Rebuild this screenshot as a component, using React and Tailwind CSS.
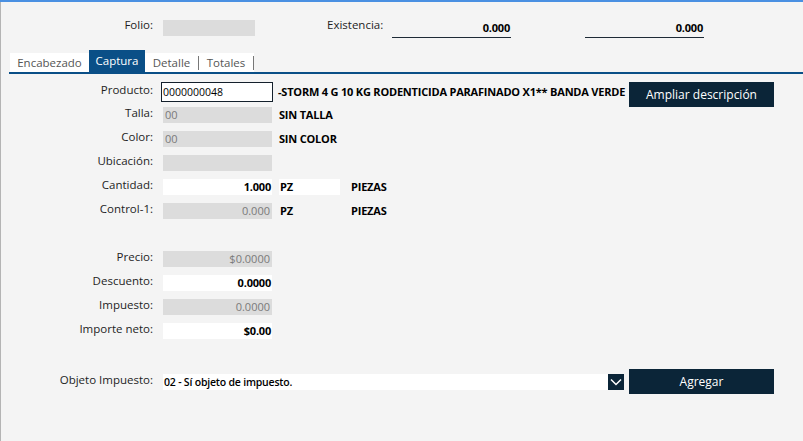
import React from "react";

const font = { fontFamily: '"Open Sans", "Noto Sans", sans-serif' };

function Label({ children, className = "" }) {
  return (
    <div className={`w-[153px] shrink-0 text-right pr-[1px] text-[11.5px] leading-[16px] text-[#1e1e1e] ${className}`}>
      {children}
    </div>
  );
}

function Gray({ children, align = "left" }) {
  return (
    <div
      className={`ml-[9px] w-[109px] h-[16px] bg-[#dcdcdc] text-[11px] leading-[16px] text-[#7a7a7a] px-[2px] ${
        align === "right" ? "text-right" : "text-left"
      }`}
    >
      {children}
    </div>
  );
}

function White({ children }) {
  return (
    <div className="ml-[9px] w-[109px] h-[16px] bg-white text-[11px] leading-[16px] text-black font-bold text-right px-[1px] tracking-[-0.2px]">
      {children}
    </div>
  );
}

function Bold({ children, className = "" }) {
  return <div className={`text-[11px] font-bold text-black tracking-[-0.2px] whitespace-nowrap ${className}`}>{children}</div>;
}

export default function App() {
  return (
    <div
      style={font}
      className="w-[803px] h-[441px] bg-[#f4f4f4] border-t-2 border-[#4a90e2] relative overflow-hidden"
    >
      <div className="h-full border-l border-[#b4b4b4] flex flex-col">
        {/* Header */}
        <div className="flex items-start mt-[18px] h-[20px]">
          <Label className="-mt-[3px]">Folio:</Label>
          <div className="ml-[9px] w-[92px] h-[16px] bg-[#dcdcdc]" />
          <div className="ml-[72px] -mt-[3px] text-[11.5px] leading-[16px] text-[#1e1e1e] w-[65px]">Existencia:</div>
          <div className="w-[119px] h-[18px] border-b border-[#1e2a36] text-right text-[11px] font-bold leading-[16px] text-black pr-[1px] tracking-[-0.2px]">
            0.000
          </div>
          <div className="ml-[74px] w-[119px] h-[18px] border-b border-[#1e2a36] text-right text-[11px] font-bold leading-[16px] text-black pr-[1px] tracking-[-0.2px]">
            0.000
          </div>
        </div>

        {/* Tabs */}
        <div className="mt-[10px] ml-[8px] pl-[1px] flex items-end border-b-2 border-[#0a4f87] h-[24px]">
          <div className="w-[79px] h-[19px] bg-white text-[11.5px] leading-[19px] text-[#555] text-center">
            Encabezado
          </div>
          <div className="w-[56px] h-[22px] bg-[#0a4f87] text-[11.5px] leading-[22px] text-white text-center">
            Captura
          </div>
          <div className="h-[19px] bg-white flex items-center text-[11.5px] text-[#555]">
            <div className="w-[54px] text-center border-r border-[#777] leading-[14px]">Detalle</div>
            <div className="w-[55px] text-center border-r border-[#777] leading-[14px]">Totales</div>
          </div>
        </div>

        {/* Body */}
        <div className="mt-[8px] flex flex-col">
          {/* Producto */}
          <div className="flex items-center h-[20px]">
            <Label className="-mt-[4px]">Producto:</Label>
            <div className="ml-[7px] w-[112px] h-[20px] border border-[#14202c] bg-white text-[10.5px] leading-[18px] text-black px-[1px]">
              0000000048
            </div>
            <Bold className="ml-[5px] w-[351px]">
              -STORM 4 G 10 KG RODENTICIDA PARAFINADO X1** BANDA VERDE
            </Bold>
            <div className="w-[145px] h-[25px] mt-[5px] bg-[#0b2538] text-white text-[12px] leading-[25px] text-center">
              Ampliar descripción
            </div>
          </div>

          <div className="flex items-center h-[16px] mt-[5px]">
            <Label className="-mt-[4px]">Talla:</Label>
            <Gray>00</Gray>
            <Bold className="ml-[7px]">SIN TALLA</Bold>
          </div>
          <div className="flex items-center h-[16px] mt-[8px]">
            <Label className="-mt-[4px]">Color:</Label>
            <Gray>00</Gray>
            <Bold className="ml-[7px]">SIN COLOR</Bold>
          </div>
          <div className="flex items-center h-[16px] mt-[8px]">
            <Label className="-mt-[4px]">Ubicación:</Label>
            <Gray></Gray>
          </div>
          <div className="flex items-center h-[16px] mt-[8px]">
            <Label className="-mt-[4px]">Cantidad:</Label>
            <White>1.000</White>
            <div className="ml-[7px] w-[61px] h-[16px] bg-white text-[11px] font-bold leading-[16px] text-black px-[1px] tracking-[-0.2px]">PZ</div>
            <Bold className="ml-[11px]">PIEZAS</Bold>
          </div>
          <div className="flex items-center h-[16px] mt-[8px]">
            <Label className="-mt-[4px]">Control-1:</Label>
            <Gray align="right">0.000</Gray>
            <div className="ml-[7px] w-[61px] h-[16px] text-[11px] font-bold leading-[16px] text-black px-[1px] tracking-[-0.2px]">PZ</div>
            <Bold className="ml-[11px]">PIEZAS</Bold>
          </div>

          <div className="flex items-center h-[16px] mt-[32px]">
            <Label className="-mt-[4px]">Precio:</Label>
            <Gray align="right">$0.0000</Gray>
          </div>
          <div className="flex items-center h-[16px] mt-[8px]">
            <Label className="-mt-[4px]">Descuento:</Label>
            <White>0.0000</White>
          </div>
          <div className="flex items-center h-[16px] mt-[8px]">
            <Label className="-mt-[4px]">Impuesto:</Label>
            <Gray align="right">0.0000</Gray>
          </div>
          <div className="flex items-center h-[16px] mt-[8px]">
            <Label className="-mt-[4px]">Importe neto:</Label>
            <White>$0.00</White>
          </div>

          {/* Objeto impuesto */}
          <div className="flex items-center h-[25px] mt-[30px]">
            <Label className="-mt-[4px]">Objeto Impuesto:</Label>
            <div className="ml-[9px] w-[445px] h-[16px] bg-white text-[10.5px] font-semibold leading-[16px] text-black px-[1px] tracking-[-0.2px]">
              02 - Sí objeto de impuesto.
            </div>
            <div className="w-[16px] h-[16px] bg-[#0b2538] flex items-center justify-center">
              <svg width="12" height="8" viewBox="0 0 12 8">
                <path d="M1 1.5 L6 6.5 L11 1.5" stroke="#fff" strokeWidth="1.5" fill="none" />
              </svg>
            </div>
            <div className="ml-[5px] w-[145px] h-[25px] bg-[#0b2538] text-white text-[12px] leading-[25px] text-center">
              Agregar
            </div>
          </div>
        </div>
      </div>
    </div>
  );
}
